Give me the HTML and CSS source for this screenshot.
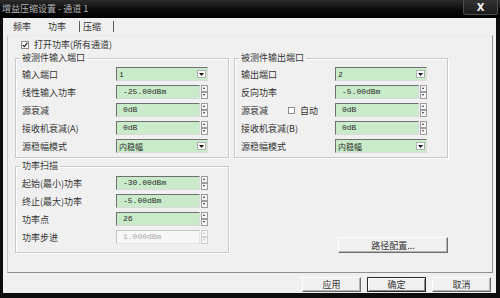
FILE: index.html
```html
<!DOCTYPE html>
<html lang="zh-CN">
  <head>
    <meta charset="UTF-8" />
    <title>增益压缩设置 - 通道 1</title>
    <link rel="stylesheet" href="styles.css">
  </head>
  <body>
    <div class="window">
      <div class="titlebar">
        <span class="title">增益压缩设置 - 通道 1</span>
        <span class="close">X</span>
      </div>
      <div class="client">
        <div class="tabs">
          <span class="tab tab-freq">频率</span>
          <span class="tab tab-power">功率</span>
          <span class="tab tab-comp">压缩</span>
        </div>
        <div class="panel">
          <div class="check-row">
            <span class="check"><svg width="6" height="6" viewBox="0 0 6 6"><path d="M0.6 2.8 L2.3 4.6 L5.4 0.8" stroke="#222" stroke-width="1.2" fill="none" /></svg></span>
            <span>打开功率(所有通道)</span>
          </div>
          <div class="groups">
            <fieldset class="group">
              <legend>被测件输入端口</legend>
              <div class="rows">
                <div class="row">
                  <span class="lbl">输入端口</span>
                  <div class="combo"><span>1</span><span class="drop"><svg width="5" height="3" viewBox="0 0 5 3"><path d="M0 0 H5 L2.5 3 Z" fill="#111" /></svg></span></div>
                </div>
                <div class="row">
                  <span class="lbl">线性输入功率</span>
                  <div class="spin"><span class="field">-25.00dBm</span><span class="arrows"><span class="up"></span><span class="dn"></span></span></div>
                </div>
                <div class="row">
                  <span class="lbl">源衰减</span>
                  <div class="spin"><span class="field">0dB</span><span class="arrows"><span class="up"></span><span class="dn"></span></span></div>
                </div>
                <div class="row">
                  <span class="lbl">接收机衰减(A)</span>
                  <div class="spin"><span class="field">0dB</span><span class="arrows"><span class="up"></span><span class="dn"></span></span></div>
                </div>
                <div class="row">
                  <span class="lbl">源稳幅模式</span>
                  <div class="combo"><span>内稳幅</span><span class="drop"><svg width="5" height="3" viewBox="0 0 5 3"><path d="M0 0 H5 L2.5 3 Z" fill="#111" /></svg></span></div>
                </div>
              </div>
            </fieldset>

            <fieldset class="group">
              <legend>被测件输出端口</legend>
              <div class="rows">
                <div class="row">
                  <span class="lbl">输出端口</span>
                  <div class="combo"><span>2</span><span class="drop"><svg width="5" height="3" viewBox="0 0 5 3"><path d="M0 0 H5 L2.5 3 Z" fill="#111" /></svg></span></div>
                </div>
                <div class="row">
                  <span class="lbl">反向功率</span>
                  <div class="spin"><span class="field">-5.00dBm</span><span class="arrows"><span class="up"></span><span class="dn"></span></span></div>
                </div>
                <div class="row">
                  <span class="lbl lbl-auto">源衰减<span class="check check-small"></span><span>自动</span></span>
                  <div class="spin"><span class="field">0dB</span><span class="arrows"><span class="up"></span><span class="dn"></span></span></div>
                </div>
                <div class="row">
                  <span class="lbl">接收机衰减(B)</span>
                  <div class="spin"><span class="field">0dB</span><span class="arrows"><span class="up"></span><span class="dn"></span></span></div>
                </div>
                <div class="row">
                  <span class="lbl">源稳幅模式</span>
                  <div class="combo"><span>内稳幅</span><span class="drop"><svg width="5" height="3" viewBox="0 0 5 3"><path d="M0 0 H5 L2.5 3 Z" fill="#111" /></svg></span></div>
                </div>
              </div>
            </fieldset>

            <fieldset class="group group-sweep">
              <legend>功率扫描</legend>
              <div class="rows">
                <div class="row">
                  <span class="lbl">起始(最小)功率</span>
                  <div class="spin"><span class="field">-30.00dBm</span><span class="arrows"><span class="up"></span><span class="dn"></span></span></div>
                </div>
                <div class="row">
                  <span class="lbl">终止(最大)功率</span>
                  <div class="spin"><span class="field">-5.00dBm</span><span class="arrows"><span class="up"></span><span class="dn"></span></span></div>
                </div>
                <div class="row">
                  <span class="lbl">功率点</span>
                  <div class="spin"><span class="field">26</span><span class="arrows"><span class="up"></span><span class="dn"></span></span></div>
                </div>
                <div class="row">
                  <span class="lbl">功率步进</span>
                  <div class="spin off"><span class="field">1.000dBm</span><span class="arrows"><span class="up"></span><span class="dn"></span></span></div>
                </div>
              </div>
            </fieldset>

            <button class="btn path-btn">路径配置...</button>
          </div>
        </div>
        <div class="footer">
          <button class="btn">应用</button>
          <button class="btn btn-default">确定</button>
          <button class="btn">取消</button>
        </div>
      </div>
    </div>
  </body>
</html>
```

FILE: styles.css
```css
* {
  box-sizing: border-box;
}

body {
  margin: 0;
  background: #000;
  font-family: "Noto Sans CJK SC", sans-serif;
  font-size: 9px;
  color: #333;
}

.window {
  width: 500px;
  height: 298px;
  background: #0d0d0d;
  overflow: hidden;
}

.titlebar {
  height: 18px;
  display: flex;
  justify-content: space-between;
  background: linear-gradient(#2b2b2b, #0a0a0a 55%, #000);

  .title {
    padding-left: 2px;
    line-height: 18px;
    color: #b4b4b4;
  }

  .close {
    width: 35px;
    height: 15px;
    margin-right: 2px;
    border: 1px solid #4c4c4c;
    border-top: none;
    border-radius: 0 0 3px 3px;
    background: linear-gradient(#333, #1b1b1b);
    color: #f2f2f2;
    font: bold 10px "DejaVu Sans", sans-serif;
    display: flex;
    align-items: center;
    justify-content: center;
  }
}

.client {
  margin-left: 3px;
  width: 493px;
  height: 275px;
  background: #f0f0f0;
}

.tabs {
  height: 17px;
  display: flex;
  align-items: center;
  padding-left: 10px;

  .tab {
    line-height: 11px;
  }

  .tab-freq {
    margin-right: 17px;
  }

  .tab-power {
    margin-right: 13px;
  }

  .tab-comp {
    border-left: 1px solid #5a5a5a;
    border-right: 1px solid #5a5a5a;
    padding: 0 12px 0 3px;
  }
}

.panel {
  margin-left: 4px;
  width: 486px;
  height: 238px;
  border: 1px solid;
  border-color: #e8e8e8 #909090 #909090 #c6c6c6;
  padding: 1px 0 0 7px;
}

.check-row {
  height: 15px;
  display: flex;
  align-items: center;
  gap: 5px;
  padding-left: 6px;
}

.check {
  width: 8px;
  height: 8px;
  border: 1px solid #8c8c8c;
  background: #fff;
  display: flex;
  align-items: center;
  justify-content: center;
}

.groups {
  display: grid;
  grid-template-columns: 214px 214px;
  column-gap: 5px;
  row-gap: 2px;
}

.group {
  margin: 0;
  min-width: 0;
  padding: 3px 6px 4px 6px;
  border: 1px solid #c8c8c8;
  box-shadow: inset 1px 1px 0 #fff, 1px 1px 0 #fff;

  legend {
    margin-left: -2px;
    padding: 0 2px;
    line-height: 12px;
  }
}

.group-sweep {
  padding-top: 4px;
  padding-bottom: 3px;
}

.rows {
  display: grid;
  row-gap: 4px;
}

.row {
  display: grid;
  grid-template-columns: 94px 92px;
  height: 14px;
  align-items: center;
}

.lbl-auto {
  display: flex;
  align-items: center;

  .check-small {
    width: 7px;
    height: 7px;
    margin: 0 5px 0 20px;
  }
}

.combo,
.spin .field {
  height: 14px;
  background: #c9ebca;
  border: 1px solid;
  border-color: #707070 #dadada #dadada #707070;
  font-family: "Liberation Mono", "Noto Sans CJK SC", monospace;
  font-size: 8px;
  color: #2a2a2a;
}

.combo {
  display: flex;
  align-items: center;
  justify-content: space-between;
  padding-left: 2px;

  .drop {
    width: 9px;
    height: 8px;
    margin-right: 1px;
    background: #fff;
    border: 1px solid #b0b0b0;
    display: flex;
    align-items: center;
    justify-content: center;
  }
}

.spin {
  display: flex;
  gap: 1px;

  .field {
    width: 84px;
    padding-left: 6px;
    line-height: 12px;
  }

  .arrows {
    width: 7px;
    height: 14px;
    display: flex;
    flex-direction: column;

    span {
      flex: 1;
      border: 1px solid #9c9c9c;
      background: #f6f6f6;
      position: relative;
    }

    span::after {
      content: "";
      position: absolute;
      left: 1px;
      top: 1px;
      border-left: 1.5px solid transparent;
      border-right: 1.5px solid transparent;
    }

    .up::after {
      border-bottom: 2px solid #333;
    }

    .dn::after {
      border-top: 2px solid #333;
    }
  }
}

.spin.off {
  .field {
    background: #f7f7f7;
    border-color: #c4c4c4 #e4e4e4 #e4e4e4 #c4c4c4;
    color: #a8a8a8;
  }

  .arrows span {
    border-color: #d0d0d0;
  }

  .arrows .up::after {
    border-bottom-color: #bbb;
  }

  .arrows .dn::after {
    border-top-color: #bbb;
  }
}

.btn {
  padding: 0;
  font-family: "Noto Sans CJK SC", sans-serif;
  font-size: 9px;
  color: #333;
  background: #f0f0f0;
  border: 1px solid;
  border-color: #fdfdfd #6e6e6e #6e6e6e #fdfdfd;
  box-shadow: inset -1px -1px 0 #b4b4b4;
}

.path-btn {
  grid-column: 2;
  grid-row: 2;
  justify-self: end;
  align-self: start;
  margin-top: 77px;
  width: 110px;
  height: 16px;
}

.footer {
  display: flex;
  justify-content: flex-end;
  gap: 6px;
  padding: 4px 5px 0 0;

  .btn {
    width: 59px;
    height: 15px;
  }

  .btn-default {
    border-color: #2a2a2a;
    box-shadow: inset 1px 1px 0 #fdfdfd, inset -1px -1px 0 #8a8a8a;
  }
}
```
